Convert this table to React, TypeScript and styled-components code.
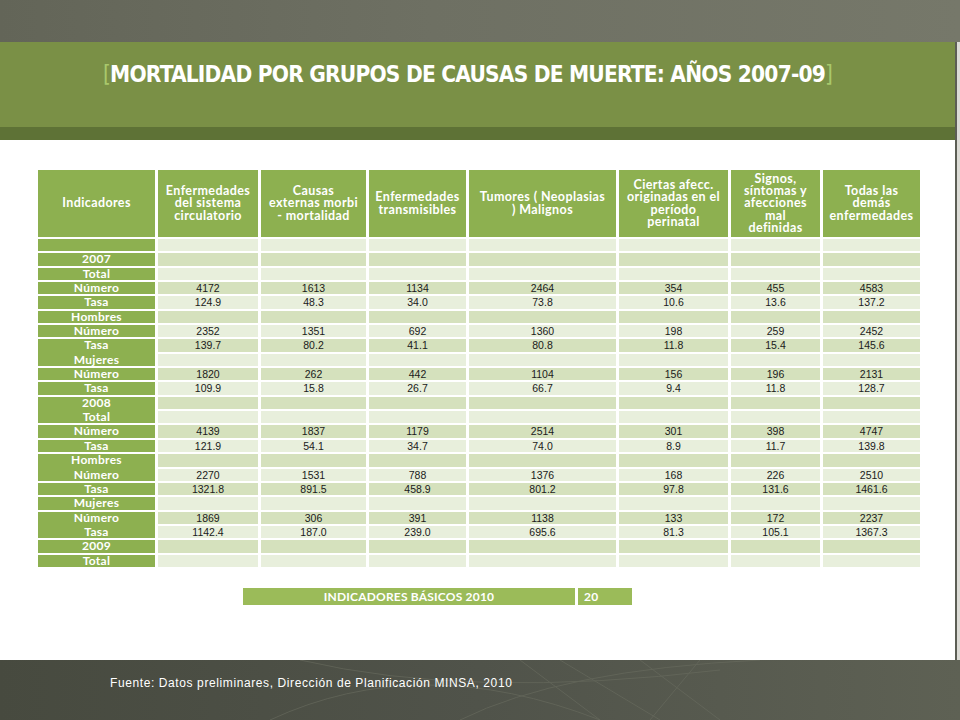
import React from "react";
import styled, { createGlobalStyle } from "styled-components";

const GlobalStyle = createGlobalStyle`
  html, body { margin: 0; padding: 0; }
  body { width: 960px; height: 720px; overflow: hidden; background: #ffffff; }
`;

const Page = styled.div`
  width: 960px;
  height: 720px;
  display: flex;
  flex-direction: column;
`;

const TopBar = styled.div`
  height: 42px;
  background: linear-gradient(90deg, #636558 0%, #6e7063 45%, #76786a 100%);
`;

const Middle = styled.div`
  flex: 1;
  display: flex;
  flex-direction: column;
  background: #dcdcd6;
  padding-right: 3px;
`;

const Inner = styled.div`
  flex: 1;
  display: flex;
  flex-direction: column;
  border-right: 2px solid #5c5e55;
  background: #ffffff;
`;

const TitleBand = styled.div`
  height: 85px;
  box-sizing: border-box;
  background: #7a9046;
  padding: 20px 0 0 103px;
  font-family: "DejaVu Sans Condensed", "DejaVu Sans", sans-serif;
  font-stretch: condensed;
  font-weight: 700;
  font-size: 22.5px;
  letter-spacing: -0.8px;
  color: #ffffff;
  line-height: 24px;
  white-space: nowrap;
`;

const Bracket = styled.span`
  color: #a9c86c;
  font-weight: 400;
`;

const TitleShadow = styled.div`
  height: 13px;
  background: #5e7236;
`;

const Body = styled.div`
  flex: 1;
  padding: 30px 0 0 38px;
  display: flex;
  flex-direction: column;
`;

const Table = styled.div`
  display: grid;
  grid-template-columns: 117px 100px 105px 97px 147px 109px 89px 97px;
  grid-template-rows: 67px repeat(23, 12.35px);
  column-gap: 3px;
  row-gap: 2px;
  width: 882px;
`;

const HeaderCell = styled.div`
  background: #8db050;
  color: #ffffff;
  font-family: Lato, "Open Sans", sans-serif;
  font-weight: 700;
  font-size: 12.5px;
  letter-spacing: 0.4px;
  line-height: 12.2px;
  text-align: center;
  display: flex;
  align-items: center;
  justify-content: center;
  padding: 0 2px;
  overflow: visible;
  white-space: pre-line;
`;

const LabelCell = styled.div<{ $join?: boolean }>`
  background: #8db050;
  color: #ffffff;
  font-family: Lato, "Open Sans", sans-serif;
  font-weight: 700;
  font-size: 12px;
  letter-spacing: 0.3px;
  line-height: 12.4px;
  text-align: center;
  margin-bottom: ${(p) => (p.$join ? "-2px" : "0")};
`;

const DataCell = styled.div<{ $dark: boolean }>`
  background: ${(p) => (p.$dark ? "#d5e1bd" : "#e8efdc")};
  color: #1a1a1a;
  font-family: "Liberation Sans", Arial, sans-serif;
  font-size: 10.5px;
  line-height: 12.4px;
  text-align: center;
`;

const BottomBar = styled.div`
  display: flex;
  gap: 3px;
  margin: 21px 0 0 205px;
`;

const BarCell = styled.div<{ $w: number; $align: string }>`
  width: ${(p) => p.$w}px;
  height: 17px;
  box-sizing: border-box;
  background: #9bbb59;
  color: #ffffff;
  font-family: Lato, "Open Sans", sans-serif;
  font-weight: 700;
  font-size: 12px;
  letter-spacing: 0.2px;
  line-height: 17px;
  text-align: ${(p) => p.$align};
  padding: 0 6px;
`;

const Footer = styled.div`
  position: relative;
  height: 60px;
  box-sizing: border-box;
  background: linear-gradient(90deg, #474a3f 0%, #50534a 50%, #5e6154 100%);
  padding: 16px 0 0 110px;
  overflow: hidden;
`;

const FooterText = styled.div`
  position: relative;
  font-family: "Liberation Sans", Arial, sans-serif;
  font-size: 12px;
  color: #ffffff;
  letter-spacing: 0.6px;
`;

const Globe = styled.svg`
  position: absolute;
  left: 0;
  top: 0;
`;

const headers = [
  "Indicadores",
  "Enfermedades\ndel sistema\ncirculatorio",
  "Causas\nexternas morbi\n- mortalidad",
  "Enfermedades\ntransmisibles",
  "Tumores ( Neoplasias\n) Malignos",
  "Ciertas afecc.\noriginadas en el\nperíodo\nperinatal",
  "Signos,\nsíntomas y\nafecciones\nmal\ndefinidas",
  "Todas las\ndemás\nenfermedades",
];

type Row = { label: string; values: (string | number)[] | null; join?: boolean };

const rows: Row[] = [
  { label: "", values: null },
  { label: "2007", values: null },
  { label: "Total", values: null },
  { label: "Número", values: [4172, 1613, 1134, 2464, 354, 455, 4583] },
  { label: "Tasa", values: ["124.9", "48.3", "34.0", "73.8", "10.6", "13.6", "137.2"] },
  { label: "Hombres", values: null },
  { label: "Número", values: [2352, 1351, 692, 1360, 198, 259, 2452] },
  { label: "Tasa", values: ["139.7", "80.2", "41.1", "80.8", "11.8", "15.4", "145.6"], join: true },
  { label: "Mujeres", values: null },
  { label: "Número", values: [1820, 262, 442, 1104, 156, 196, 2131] },
  { label: "Tasa", values: ["109.9", "15.8", "26.7", "66.7", "9.4", "11.8", "128.7"] },
  { label: "2008", values: null, join: true },
  { label: "Total", values: null },
  { label: "Número", values: [4139, 1837, 1179, 2514, 301, 398, 4747] },
  { label: "Tasa", values: ["121.9", "54.1", "34.7", "74.0", "8.9", "11.7", "139.8"] },
  { label: "Hombres", values: null, join: true },
  { label: "Número", values: [2270, 1531, 788, 1376, 168, 226, 2510] },
  { label: "Tasa", values: ["1321.8", "891.5", "458.9", "801.2", "97.8", "131.6", "1461.6"] },
  { label: "Mujeres", values: null },
  { label: "Número", values: [1869, 306, 391, 1138, 133, 172, 2237], join: true },
  { label: "Tasa", values: ["1142.4", "187.0", "239.0", "695.6", "81.3", "105.1", "1367.3"] },
  { label: "2009", values: null },
  { label: "Total", values: null },
];

export default function App() {
  return (
    <>
      <GlobalStyle />
      <Page>
        <TopBar />
        <Middle>
          <Inner>
            <TitleBand>
              <Bracket>[</Bracket>MORTALIDAD POR GRUPOS DE CAUSAS DE MUERTE: AÑOS 2007-09<Bracket>]</Bracket>
            </TitleBand>
            <TitleShadow />
            <Body>
              <Table>
                {headers.map((h, i) => (
                  <HeaderCell key={"h" + i}>{h}</HeaderCell>
                ))}
                {rows.map((r, ri) => (
                  <React.Fragment key={"r" + ri}>
                    <LabelCell $join={r.join}>{r.label}</LabelCell>
                    {Array.from({ length: 7 }).map((_, ci) => (
                      <DataCell key={ci} $dark={ri % 2 === 1}>
                        {r.values ? r.values[ci] : ""}
                      </DataCell>
                    ))}
                  </React.Fragment>
                ))}
              </Table>
              <BottomBar>
                <BarCell $w={332} $align="center">INDICADORES BÁSICOS 2010</BarCell>
                <BarCell $w={54} $align="left">20</BarCell>
              </BottomBar>
            </Body>
          </Inner>
        </Middle>
        <Footer>
          <Globe width="960" height="60" viewBox="0 0 960 60">
            <g fill="none" stroke="#6a6d60" strokeWidth="1" opacity="0.6">
              <path d="M270 60 Q 420 -10 600 60" />
              <path d="M300 0 Q 470 40 720 10" />
              <path d="M520 0 L 600 60" />
              <path d="M560 0 L 660 60" />
              <path d="M640 0 L 720 60" />
              <path d="M700 0 L 650 60" />
              <path d="M460 60 Q 560 10 760 0" />
            </g>
          </Globe>
          <FooterText>Fuente: Datos preliminares, Dirección de Planificación MINSA, 2010</FooterText>
        </Footer>
      </Page>
    </>
  );
}
